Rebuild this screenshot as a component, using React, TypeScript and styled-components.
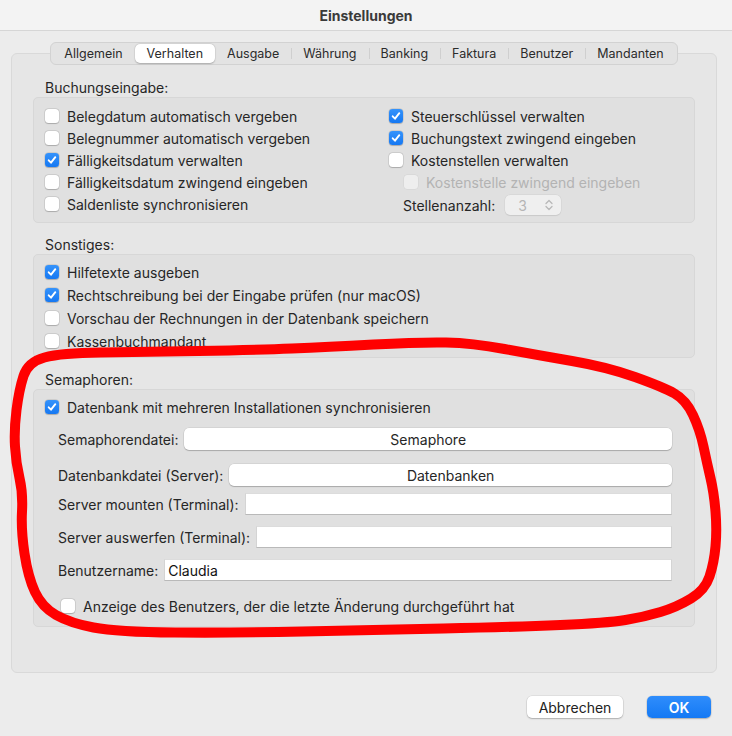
import React from "react";
import styled, { createGlobalStyle } from "styled-components";

const GlobalStyle = createGlobalStyle`
  html, body {
    margin: 0;
    padding: 0;
    background: #ececec;
  }
  body {
    font-family: Inter, "Noto Sans", sans-serif;
    -webkit-font-smoothing: antialiased;
  }
`;

const TEXT = "#262626";

const Window = styled.div`
  position: relative;
  width: 732px;
  height: 736px;
  display: flex;
  flex-direction: column;
  background: #ececec;
  color: ${TEXT};
  font-size: 14px;
  overflow: hidden;
`;

const TitleBar = styled.div`
  height: 30px;
  display: flex;
  align-items: center;
  justify-content: center;
  background: #f3f3f3;
  border-bottom: 1px solid #d6d6d6;
  font-weight: 700;
  font-size: 14px;
  color: #3a3a3a;
`;

const Body = styled.div`
  display: flex;
  flex-direction: column;
  padding: 11px 15px 0 11px;
`;

const TabStrip = styled.div`
  position: relative;
  z-index: 1;
  align-self: center;
  display: flex;
  height: 23px;
  margin-bottom: -12px;
  padding: 1px;
  box-sizing: border-box;
  background: #e3e3e3;
  border: 1px solid #d2d2d2;
  border-radius: 6px;
`;

const Tab = styled.div<{ $active?: boolean; $sep?: boolean }>`
  position: relative;
  display: flex;
  align-items: center;
  padding: 0 12px;
  font-size: 12.5px;
  color: #2b2b2b;
  border-radius: 5px;
  background: ${(p) => (p.$active ? "#ffffff" : "transparent")};
  box-shadow: ${(p) =>
    p.$active ? "0 0.5px 1.5px rgba(0,0,0,0.22), 0 0 0 0.5px rgba(0,0,0,0.06)" : "none"};

  &::before {
    content: "";
    display: ${(p) => (p.$sep ? "block" : "none")};
    position: absolute;
    left: 0;
    top: 4px;
    bottom: 4px;
    width: 1px;
    background: #cfcfcf;
  }
`;

const Panel = styled.div`
  display: flex;
  flex-direction: column;
  gap: 13px;
  padding: 25px 21px 45px 21px;
  background: #e6e6e6;
  border: 1px solid #d9d9d9;
  border-radius: 6px;
`;

const Section = styled.div`
  display: flex;
  flex-direction: column;
`;

const SectionLabel = styled.div`
  line-height: 18px;
  padding-left: 12px;
`;

const Group = styled.div<{ $pt: number; $pb: number }>`
  padding: ${(p) => p.$pt}px 22px ${(p) => p.$pb}px 11px;
  background: #e0e0e0;
  border: 1px solid #d7d7d7;
  border-radius: 5px;
`;

const Columns = styled.div`
  display: grid;
  grid-template-columns: 344px 1fr;
`;

const Column = styled.div<{ $gap?: number }>`
  display: flex;
  flex-direction: column;
  gap: ${(p) => p.$gap ?? 0}px;
`;

const Row = styled.div<{ $indent?: number; $h?: number; $mt?: number }>`
  display: flex;
  align-items: center;
  gap: 8px;
  height: ${(p) => p.$h ?? 22}px;
  margin-top: ${(p) => p.$mt ?? 0}px;
  padding-left: ${(p) => p.$indent ?? 0}px;
  white-space: nowrap;
`;

const Box = styled.span<{ $checked?: boolean; $disabled?: boolean }>`
  flex: none;
  width: 14px;
  height: 14px;
  border-radius: 3.5px;
  display: flex;
  align-items: center;
  justify-content: center;
  box-sizing: border-box;
  background: ${(p) =>
    p.$checked
      ? "linear-gradient(#3593fb, #1678f2)"
      : p.$disabled
      ? "rgba(255,255,255,0.45)"
      : "#ffffff"};
  box-shadow: ${(p) =>
    p.$disabled
      ? "0 0 0 0.5px rgba(0,0,0,0.06)"
      : "0 0 0 0.5px rgba(0,0,0,0.14), 0 0.5px 1px rgba(0,0,0,0.18)"};
`;

const Text = styled.span<{ $disabled?: boolean }>`
  color: ${(p) => (p.$disabled ? "#b3b3b3" : TEXT)};
`;

const Stepper = styled.div`
  display: flex;
  align-items: center;
  justify-content: space-between;
  width: 56px;
  height: 20px;
  margin-left: 2px;
  padding: 0 8px 0 13px;
  box-sizing: border-box;
  border-radius: 5px;
  background: #efefef;
  box-shadow: 0 0 0 0.5px rgba(0, 0, 0, 0.05), 0 0.5px 1px rgba(0, 0, 0, 0.08);
  color: #b5b5b5;
`;

const FieldRow = styled.div<{ $mt: number }>`
  display: flex;
  align-items: center;
  gap: 6px;
  height: 22px;
  margin-top: ${(p) => p.$mt}px;
  padding-left: 13px;
  white-space: nowrap;
`;

const PushField = styled.div`
  flex: 1;
  height: 22px;
  display: flex;
  align-items: center;
  justify-content: center;
  background: #ffffff;
  border-radius: 5px;
  box-shadow: 0 0 0 0.5px rgba(0, 0, 0, 0.1), 0 1px 1px rgba(0, 0, 0, 0.2);
`;

const TextField = styled.div`
  flex: 1;
  height: 22px;
  box-sizing: border-box;
  display: flex;
  align-items: center;
  padding-left: 3px;
  background: #ffffff;
  border: 1px solid #d4d4d4;
  border-top-color: #dcdcdc;
  border-bottom-color: #b9b9b9;
  color: #111;
`;

const Footer = styled.div`
  display: flex;
  justify-content: flex-end;
  gap: 24px;
  padding: 23px 6px 0 0;
`;

const DialogButton = styled.div<{ $primary?: boolean; $w: number }>`
  width: ${(p) => p.$w}px;
  height: 22px;
  display: flex;
  align-items: center;
  justify-content: center;
  border-radius: 5px;
  background: ${(p) => (p.$primary ? "linear-gradient(#2f8dfc, #1479f4)" : "#ffffff")};
  color: ${(p) => (p.$primary ? "#ffffff" : "#222")};
  font-weight: ${(p) => (p.$primary ? 600 : 400)};
  box-shadow: 0 0 0 0.5px rgba(0, 0, 0, 0.1), 0 1px 1.5px rgba(0, 0, 0, 0.22);
`;

const Scribble = styled.svg`
  position: absolute;
  left: 0;
  top: 0;
  pointer-events: none;
`;

const Check = () => (
  <svg width="14" height="14" viewBox="0 0 14 14">
    <path
      d="M3.7 7.3 L6 9.7 L10.3 4.2"
      fill="none"
      stroke="#fff"
      strokeWidth="1.9"
      strokeLinecap="round"
      strokeLinejoin="round"
    />
  </svg>
);

const CheckRow = ({
  label,
  checked,
  disabled,
  indent,
  mt,
}: {
  label: string;
  checked?: boolean;
  disabled?: boolean;
  indent?: number;
  mt?: number;
}) => (
  <Row $indent={indent} $mt={mt}>
    <Box $checked={checked} $disabled={disabled}>
      {checked && <Check />}
    </Box>
    <Text $disabled={disabled}>{label}</Text>
  </Row>
);

const tabs = ["Allgemein", "Verhalten", "Ausgabe", "Währung", "Banking", "Faktura", "Benutzer", "Mandanten"];
const ACTIVE = 1;

// hand-drawn marker loop round the Semaphoren block
const loop: [number, number][] = [
  [28, 362], [61, 353], [140, 352], [257, 350], [327, 347], [420, 342], [472, 343],
  [537, 355], [607, 367], [663, 387], [686, 400], [700, 430], [707, 463], [714, 493],
  [717, 530], [714, 563], [705, 590], [677, 607], [644, 617], [607, 623], [514, 627],
  [373, 630], [233, 633], [117, 632], [70, 623], [42, 607], [28, 577], [21, 530],
  [23, 493], [16, 463], [14, 430], [19, 390],
];

const loopPath = () => {
  const mid = (a: [number, number], b: [number, number]) => [(a[0] + b[0]) / 2, (a[1] + b[1]) / 2];
  const n = loop.length;
  const start = mid(loop[0], loop[1]);
  let d = `M${start[0]} ${start[1]}`;
  for (let i = 1; i <= n; i++) {
    const p = loop[i % n];
    const m = mid(p, loop[(i + 1) % n]);
    d += ` Q${p[0]} ${p[1]} ${m[0]} ${m[1]}`;
  }
  return d + " Z";
};

const App = () => (
  <Window>
    <GlobalStyle />
    <TitleBar>Einstellungen</TitleBar>
    <Body>
      <TabStrip>
        {tabs.map((t, i) => (
          <Tab key={t} $active={i === ACTIVE} $sep={i > 0 && i !== ACTIVE && i !== ACTIVE + 1}>
            {t}
          </Tab>
        ))}
      </TabStrip>
      <Panel>
        <Section>
          <SectionLabel>Buchungseingabe:</SectionLabel>
          <Group $pt={7} $pb={5}>
            <Columns>
              <Column>
                <CheckRow label="Belegdatum automatisch vergeben" />
                <CheckRow label="Belegnummer automatisch vergeben" />
                <CheckRow label="Fälligkeitsdatum verwalten" checked />
                <CheckRow label="Fälligkeitsdatum zwingend eingeben" />
                <CheckRow label="Saldenliste synchronisieren" />
              </Column>
              <Column>
                <CheckRow label="Steuerschlüssel verwalten" checked />
                <CheckRow label="Buchungstext zwingend eingeben" checked />
                <CheckRow label="Kostenstellen verwalten" />
                <CheckRow label="Kostenstelle zwingend eingeben" disabled indent={15} />
                <Row $indent={14} $h={24}>
                  <Text>Stellenanzahl:</Text>
                  <Stepper>
                    <span>3</span>
                    <svg width="8" height="12" viewBox="0 0 8 12">
                      <path
                        d="M1 4.5 L4 1.5 L7 4.5 M1 7.5 L4 10.5 L7 7.5"
                        fill="none"
                        stroke="#b8b8b8"
                        strokeWidth="1.3"
                        strokeLinecap="round"
                        strokeLinejoin="round"
                      />
                    </svg>
                  </Stepper>
                </Row>
              </Column>
            </Columns>
          </Group>
        </Section>

        <Section>
          <SectionLabel>Sonstiges:</SectionLabel>
          <Group $pt={6} $pb={5}>
            <Column $gap={1}>
              <CheckRow label="Hilfetexte ausgeben" checked />
              <CheckRow label="Rechtschreibung bei der Eingabe prüfen (nur macOS)" checked />
              <CheckRow label="Vorschau der Rechnungen in der Datenbank speichern" />
              <CheckRow label="Kassenbuchmandant" />
            </Column>
          </Group>
        </Section>

        <Section>
          <SectionLabel>Semaphoren:</SectionLabel>
          <Group $pt={6} $pb={9}>
            <CheckRow label="Datenbank mit mehreren Installationen synchronisieren" checked />
            <FieldRow $mt={10}>
              <Text>Semaphorendatei:</Text>
              <PushField>Semaphore</PushField>
            </FieldRow>
            <FieldRow $mt={14}>
              <Text>Datenbankdatei (Server):</Text>
              <PushField>Datenbanken</PushField>
            </FieldRow>
            <FieldRow $mt={7}>
              <Text>Server mounten (Terminal):</Text>
              <TextField />
            </FieldRow>
            <FieldRow $mt={11}>
              <Text>Server auswerfen (Terminal):</Text>
              <TextField />
            </FieldRow>
            <FieldRow $mt={11}>
              <Text>Benutzername:</Text>
              <TextField>Claudia</TextField>
            </FieldRow>
            <CheckRow label="Anzeige des Benutzers, der die letzte Änderung durchgeführt hat" indent={16} mt={14} />
          </Group>
        </Section>
      </Panel>
      <Footer>
        <DialogButton $w={96}>Abbrechen</DialogButton>
        <DialogButton $primary $w={64}>
          OK
        </DialogButton>
      </Footer>
    </Body>
    <Scribble width="732" height="736" viewBox="0 0 732 736">
      <path
        d={loopPath()}
        fill="none"
        stroke="#ff0000"
        strokeWidth="10"
        strokeLinecap="round"
        strokeLinejoin="round"
      />
    </Scribble>
  </Window>
);

export default App;
